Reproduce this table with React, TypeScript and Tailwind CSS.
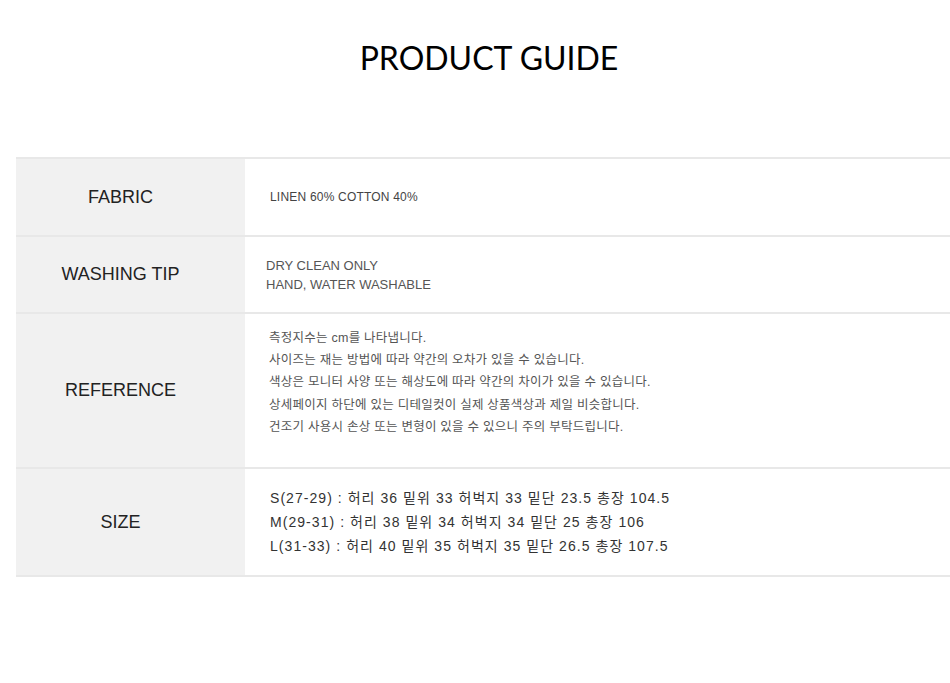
const rows = [
  {
    label: "FABRIC",
    h: "h-[78px]",
    body: (
      <p className="pl-[25px] text-[12px] tracking-[0.2px] text-[#444]">LINEN 60% COTTON 40%</p>
    ),
  },
  {
    label: "WASHING TIP",
    h: "h-[77px]",
    body: (
      <div className="pl-[21px] text-[13px] leading-[19px] text-[#555]">
        <p>DRY CLEAN ONLY</p>
        <p>HAND, WATER WASHABLE</p>
      </div>
    ),
  },
  {
    label: "REFERENCE",
    h: "h-[155px]",
    body: (
      <div className="pb-[16px] pl-[24px] text-[12.5px] leading-[22.3px] tracking-[0.25px] text-[#555]">
        <p>측정지수는 cm를 나타냅니다.</p>
        <p>사이즈는 재는 방법에 따라 약간의 오차가 있을 수 있습니다.</p>
        <p>색상은 모니터 사양 또는 해상도에 따라 약간의 차이가 있을 수 있습니다.</p>
        <p>상세페이지 하단에 있는 디테일컷이 실제 상품색상과 제일 비슷합니다.</p>
        <p>건조기 사용시 손상 또는 변형이 있을 수 있으니 주의 부탁드립니다.</p>
      </div>
    ),
  },
  {
    label: "SIZE",
    h: "h-[108px]",
    body: (
      <div className="pl-[25px] text-[14px] leading-[24px] tracking-[1.05px] text-[#333]">
        <p>S(27-29) : 허리 36 밑위 33 허벅지 33 밑단 23.5 총장 104.5</p>
        <p>M(29-31) : 허리 38 밑위 34 허벅지 34 밑단 25 총장 106</p>
        <p>L(31-33) : 허리 40 밑위 35 허벅지 35 밑단 26.5 총장 107.5</p>
      </div>
    ),
  },
];

export default function App() {
  return (
    <div className="h-[683px] w-[950px] overflow-hidden bg-white font-['Liberation_Sans','Noto_Sans_CJK_KR',sans-serif]">
      <h1 className="pl-[28px] pt-[39px] text-center font-['Lato',sans-serif] text-[32px] leading-[38px] text-black">
        PRODUCT GUIDE
      </h1>
      <div className="ml-4 mt-[80px] border-t-2 border-[#e8e8e8]">
        {rows.map((r) => (
          <div key={r.label} className={`flex border-b-2 border-[#e8e8e8] ${r.h}`}>
            <div className="flex w-[229px] shrink-0 items-center justify-center bg-[#f1f1f1] pr-[20px] text-[18px] text-[#222]">
              {r.label}
            </div>
            <div className="flex flex-1 items-center">{r.body}</div>
          </div>
        ))}
      </div>
    </div>
  );
}
